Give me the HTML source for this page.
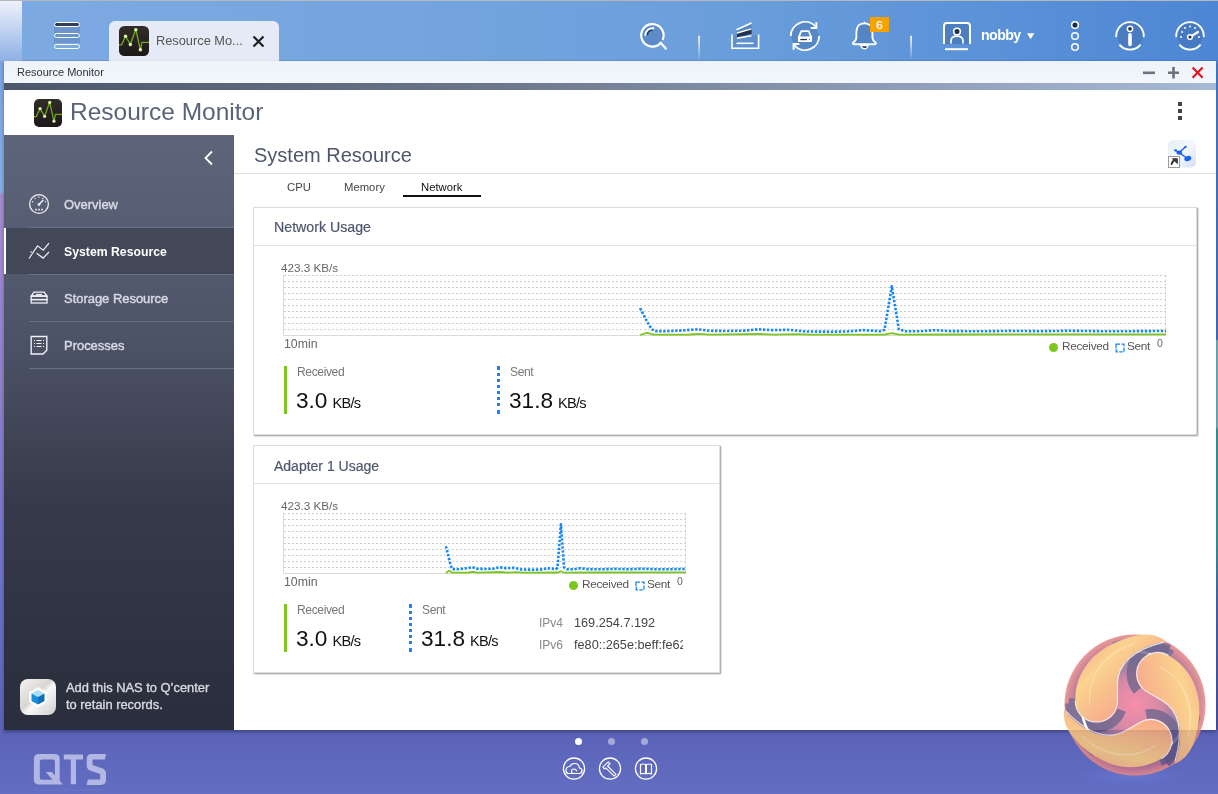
<!DOCTYPE html>
<html><head><meta charset="utf-8">
<style>
*{margin:0;padding:0;box-sizing:border-box}
html,body{width:1218px;height:794px;overflow:hidden}
body{position:relative;font-family:"Liberation Sans",sans-serif;background:#5c64b9}
.a{position:absolute}
.t{position:absolute;white-space:nowrap;line-height:1;will-change:transform}
#desk{left:0;top:0;width:1218px;height:794px;background:linear-gradient(180deg,#7fa8e1 0px,#7aa3df 61px,#86aee6 192px,#a58bd2 194px,#8d7fcc 400px,#6a70c8 600px,#5b63b8 735px,#626ec2 794px)}
#topbar{left:0;top:0;width:1218px;height:61px;background:linear-gradient(90deg,#7eaae2 0%,#73a3dd 40%,#6a9edb 60%,#4d86d4 100%)}
#win{left:4px;top:61px;width:1212px;height:669px;background:#fff;box-shadow:0 2px 3px rgba(20,20,60,.4)}
#tbar{left:0;top:0;width:1212px;height:22px;background:linear-gradient(180deg,#eef2f9,#f2f6fd)}
#gbar{left:0;top:22px;width:1212px;height:7px;background:linear-gradient(90deg,#4d566c 0%,#6c7689 40%,#8a9ab4 70%,#a8b9d4 100%)}
#side{left:0;top:74px;width:230px;height:595px;background:linear-gradient(180deg,#5e657a 0%,#4e5468 33%,#363a4a 62%,#2a2d3b 100%)}
.sep{position:absolute;left:25px;width:205px;height:1px;background:#6a7084}
.nav{position:absolute;font-weight:normal;font-size:12.95px;color:#d6d9e4;-webkit-text-stroke:0.45px currentColor}
.card{position:absolute;background:#fff;border:1px solid #dedede;box-shadow:1px 1px 1.5px rgba(0,0,0,.42)}
.ch{position:absolute;left:0;width:100%;height:1px;background:#e2e2e2}
.lbl{color:#666;font-size:11.7px}
.lg{font-size:11.8px;color:#555;letter-spacing:-0.3px}
.tab{font-size:11.3px;color:#444}
</style></head><body>
<div id="desk" class="a"></div>
<div id="topbar" class="a"></div>
<div class="a" style="left:1214px;top:61px;width:4px;height:669px;background:linear-gradient(180deg,#4a80d0 0px,#4a70c4 278px,#7ab2bc 280px,#7ab2bc 366px,#3c9898 369px,#3c9898 480px,#4c68b0 540px,#4a52a8 669px)"></div>
<div class="a" style="left:0;top:0;width:1218px;height:1px;background:#b4b8c0"></div>
<div class="a" style="left:22px;top:60px;width:1196px;height:1px;background:rgba(40,90,170,.18)"></div>
<div class="a" style="left:0;top:1px;width:22px;height:60px;background:linear-gradient(180deg,#eef2fa,#8eb0e4)"></div>

<!-- hamburger -->
<div class="a" style="left:54px;top:27px;width:26px;height:16px;background:rgba(60,90,140,.25)"></div>
<div class="a" style="left:54px;top:22px;width:26px;height:5px;border:1.5px solid #fff;border-radius:3px;background:#2e3d5a"></div>
<div class="a" style="left:54px;top:33px;width:26px;height:5px;border:1.5px solid #fff;border-radius:3px;background:transparent"></div>
<div class="a" style="left:54px;top:44px;width:26px;height:5px;border:1.5px solid #fff;border-radius:3px;background:transparent"></div>

<!-- tab -->
<div class="a" style="left:109px;top:21px;width:170px;height:40px;background:#e4ebf6;border-radius:6px 6px 0 0"></div>

<svg class="a" style="left:119px;top:26px" width="30" height="30" viewBox="0 0 28 28">
 <rect x="0" y="0" width="28" height="28" rx="5" fill="url(#ig)"/>
 <path d="M0 17.6L2.4 17.6L6.1 9.6L10.6 17.3L15.7 3.1L19.95 22.4L21.4 15.3L28 15.3" stroke="#72ac1c" stroke-width="1.2" fill="none" stroke-linejoin="round"/>
 <g fill="#daf2b0"><circle cx="6.1" cy="9.6" r="1.6"/><circle cx="10.6" cy="17.3" r="1.6"/><circle cx="15.7" cy="3.4" r="1.6"/><circle cx="19.95" cy="22.2" r="1.6"/></g>
</svg>
<div class="t" style="left:155.5px;top:34.5px;font-size:12.8px;color:#555">Resource Mo...</div>
<svg class="a" style="left:252px;top:35px" width="13" height="13" viewBox="0 0 13 13"><path d="M1.5 1.5L11.5 11.5M11.5 1.5L1.5 11.5" stroke="#1e1e1e" stroke-width="2.2"/></svg>


<!-- top icons -->
<svg class="a" style="left:620px;top:10px" width="600" height="51" viewBox="620 10 600 51">
 <!-- search -->
 <circle cx="652.4" cy="35.4" r="10.5" fill="rgba(50,90,150,.28)"/>
 <path d="M660.6 43A11.2 11.2 0 1 1 662.6 40" stroke="#fff" stroke-width="2.1" fill="none"/>
 <path d="M660.4 42.6L665.8 48.6" stroke="#fff" stroke-width="2.2" stroke-linecap="round"/>
 <path d="M647.3 35.2A5.2 5.2 0 0 1 652.4 30.2" stroke="#26344f" stroke-width="1.8" fill="none"/>
 <path d="M645.3 35A7.1 7.1 0 0 1 653.4 28.3" stroke="#fff" stroke-width="1.9" fill="none" stroke-linecap="round"/>
 <!-- dividers -->
 <defs><linearGradient id="dv" x1="0" y1="0" x2="0" y2="1"><stop offset="0" stop-color="#fff4dc"/><stop offset="1" stop-color="#fff" stop-opacity="0.05"/></linearGradient></defs>
 <rect x="698.2" y="35.8" width="1.8" height="23.5" fill="url(#dv)"/>
 <rect x="910.2" y="35.8" width="1.8" height="23.5" fill="url(#dv)"/>
 <!-- stack -->
 <path d="M732.8 35.2H757.8V47.4H732.8Z" fill="rgba(50,90,150,.18)"/>
 <path d="M736.5 30L751.5 23.3V37L737 38.5Z" fill="rgba(40,80,140,.3)"/>
 <path d="M732 34.5V48.2H758.6V34.5" stroke="#fff" stroke-width="1.6" fill="none"/>
 <path d="M736.5 43.3H753.5" stroke="#fff" stroke-width="1.6"/>
 <path d="M736.5 29.8L751.5 23" stroke="#fff" stroke-width="1.7"/>
 <path d="M737 32.5L751.5 28.3L751.5 33.8L737 37.2Z" fill="#24324c"/>
 <path d="M737 33L751.5 28.8" stroke="#fff" stroke-width="1.4"/>
 <path d="M737 38.3L751.5 35.8" stroke="#fff" stroke-width="1.6"/>
 <!-- sync -->
 <circle cx="805" cy="36" r="13.5" fill="rgba(50,90,150,.28)"/>
 <path d="M790.8 36A14.2 14.2 0 0 1 815.6 26.6" stroke="#fff" stroke-width="1.9" fill="none"/>
 <path d="M819.2 36A14.2 14.2 0 0 1 794.4 45.4" stroke="#fff" stroke-width="1.9" fill="none"/>
 <path d="M810.6 27.9H816.3V22.3" stroke="#fff" stroke-width="2" fill="none"/>
 <path d="M799.3 44.1H793.6V49.7" stroke="#fff" stroke-width="2" fill="none"/>
 <path d="M801.3 31.2H808.7L811.3 37.3H798.7Z" stroke="#fff" stroke-width="1.8" fill="none" stroke-linejoin="round"/>
 <rect x="798" y="37" width="14" height="5" rx=".8" fill="#fff"/>
 <rect x="800.3" y="38.9" width="6.6" height="1.3" fill="#26344f"/>
 <circle cx="809.5" cy="39.5" r=".7" fill="#5a7ab0"/>
 <!-- bell -->
 <path d="M864.4 23.4C859 23.4 856.4 27.2 856.4 31.8V37C856.4 40 854.8 41.4 853.5 42.3Q852.6 43 853 43.7Q853.4 44.3 854.5 44.3H874.3Q875.4 44.3 875.8 43.7Q876.2 43 875.3 42.3C874 41.4 872.4 40 872.4 37V31.8C872.4 27.2 869.8 23.4 864.4 23.4Z" fill="rgba(50,90,150,.3)" stroke="#fff" stroke-width="1.9" stroke-linejoin="round"/>
 <path d="M862.8 23.6L864.4 21.4L866 23.6Z" fill="#fff"/>
 <path d="M861 45.4A3.4 3.4 0 0 0 867.8 45.4Z" fill="#26344f" stroke="#fff" stroke-width="1.5"/>
 <rect x="870" y="17" width="19" height="15" fill="#f6a300"/>
 <text x="879.6" y="28.8" font-family="Liberation Sans" font-size="11.8" fill="#fff" stroke="#fff" stroke-width=".25" text-anchor="middle">6</text>
 <!-- user -->
 <path d="M944 44V26Q944 23 947 23H967Q970 23 970 26V44" fill="rgba(50,90,150,.35)" stroke="#fff" stroke-width="2"/>
 <rect x="945" y="48.2" width="23" height="2" fill="#fff"/>
 <circle cx="957" cy="31.5" r="3.3" fill="#22304a" stroke="#fff" stroke-width="1.6"/>
 <path d="M951 43.5V41Q951 36.2 957 36.2Q963 36.2 963 41V43.5" stroke="#fff" stroke-width="1.7" fill="none"/>
 <path d="M1027 33.2H1034.3L1030.65 39.2Z" fill="#fff"/>
 <!-- kebab -->
 <circle cx="1075" cy="25" r="3.3" fill="#1e2b44" stroke="#fff" stroke-width="1.5"/>
 <circle cx="1075" cy="36" r="3.3" fill="none" stroke="#fff" stroke-width="1.5"/>
 <circle cx="1075" cy="47" r="3.3" fill="none" stroke="#fff" stroke-width="1.5"/>
 <!-- info -->
 <circle cx="1130" cy="36" r="12.5" fill="rgba(50,90,150,.3)"/>
 <path d="M1116.25 37.1A13.8 13.8 0 1 1 1143.75 37.1" stroke="#fff" stroke-width="1.9" fill="none"/>
 <path d="M1119.40 44.7A13.8 13.8 0 0 0 1140.60 44.7" stroke="#fff" stroke-width="1.9" fill="none"/>
 <circle cx="1130" cy="28.8" r="2.6" fill="#22304a" stroke="#fff" stroke-width="1.5"/>
 <path d="M1130 34.8V44.5" stroke="#fff" stroke-width="3.6" stroke-linecap="round"/>
 <!-- gauge -->
 <circle cx="1190" cy="36" r="12.5" fill="rgba(50,90,150,.3)"/>
 <path d="M1176.25 37.1A13.8 13.8 0 1 1 1203.75 37.1" stroke="#fff" stroke-width="1.9" fill="none"/>
 <path d="M1179.40 44.7A13.8 13.8 0 0 0 1200.60 44.7" stroke="#fff" stroke-width="1.9" fill="none"/>
 <g fill="#fff"><circle cx="1190" cy="26.5" r="1"/><circle cx="1185" cy="28" r="1"/><circle cx="1195" cy="28" r="1"/><circle cx="1182" cy="32" r="1"/><circle cx="1181" cy="37" r="1"/><circle cx="1199" cy="37" r="1"/></g>
 <path d="M1190 37L1198 32" stroke="#fff" stroke-width="2.2" stroke-linecap="round"/>
 <circle cx="1190" cy="37" r="2.3" fill="#22304a" stroke="#fff" stroke-width="1.5"/>
</svg>
<div class="t" style="left:980.8px;top:28px;font-size:14.2px;font-weight:bold;color:#fff;letter-spacing:-0.6px">nobby</div>


<!-- dock -->
<div class="a" style="left:575px;top:738px;width:7px;height:7px;border-radius:50%;background:#fff"></div>
<div class="a" style="left:608px;top:738px;width:7px;height:7px;border-radius:50%;background:rgba(255,255,255,.45)"></div>
<div class="a" style="left:641px;top:738px;width:7px;height:7px;border-radius:50%;background:rgba(255,255,255,.45)"></div>
<svg class="a" style="left:560px;top:754px" width="100" height="30" viewBox="560 754 100 30" fill="none" stroke="#fff" stroke-width="1.3">
 <circle cx="574" cy="768.6" r="10.6"/>
 <path d="M568.5 773.5H579.5Q582 773.5 582 770.8Q582 768.2 579.4 768Q579 763.5 574.5 763.5Q571 763.5 569.8 766.5Q566 766.8 566 770.2Q566 773.5 568.5 773.5Z" stroke-width="1.2"/>
 <path d="M576.5 771.5Q576.5 769 574 769Q571.5 769 571.5 771.2Q571.5 773.5 574 773.5" stroke-width="1.1"/>
 <circle cx="610" cy="768.6" r="10.6"/>
 <path d="M602.8 767.2L608.2 761.8L610 763.6L607.6 766L616 774.4L614.2 776.2L605.8 767.8L604.6 769Z" stroke-width="1.1" stroke-linejoin="round"/>
 <circle cx="646" cy="768.6" r="10.6"/>
 <path d="M640.5 764.5Q643.5 763.5 645.6 764.5V773.8Q643.5 773 640.5 773.8ZM646.4 764.5Q648.5 763.5 651.5 764.5V773.8Q648.5 773 646.4 773.8Z" stroke-width="1.2"/>
</svg>
<!-- QTS logo -->
<svg class="a" style="left:0;top:740px" width="120" height="54" viewBox="0 740 120 54">
 <g fill="#b3b7e3">
  <path fill-rule="evenodd" d="M39 753.9H54.7Q59.7 753.9 59.7 758.9V779.5Q59.7 784.5 54.7 784.5H39Q33.9 784.5 33.9 779.5V758.9Q33.9 753.9 39 753.9ZM41.8 759.4H52.9Q54.9 759.4 54.9 761.4V777.7Q54.9 779.7 52.9 779.7H41.8Q39.8 779.7 39.8 777.7V761.4Q39.8 759.4 41.8 759.4Z"/>
  <path d="M45.7 772H51.8L63 784.4H56.8Z"/>
  <path d="M63.8 754.6H83V759.4H76V784.3H70.8V759.4H63.8Z"/>
  <path d="M92 753.9H106L104.8 759.4H93.5Q92.5 759.4 92.5 760.4V765L102 768.2Q106 769.6 106 773.5V779.5Q106 784.9 101 784.9H86.7L87.8 779.5H99.2Q100.2 779.5 100.2 778.5V774L90.6 770.8Q86.7 769.5 86.7 765.5V759Q86.7 753.9 92 753.9Z"/>
 </g>
 <rect x="35" y="789.5" width="70" height="1" fill="rgba(180,184,228,.12)"/>
</svg>

<!-- window -->
<div id="win" class="a">
  <div id="tbar" class="a"></div>
  <div class="t" style="left:12.5px;top:6px;font-size:11px;color:#333">Resource Monitor</div>
  <div id="gbar" class="a"></div>

  <!-- window controls -->
  <svg class="a" style="left:1136px;top:4px" width="70" height="16" viewBox="1140 65 70 16">
   <path d="M1143 72.8H1155" stroke="#6c7280" stroke-width="2.6"/>
   <path d="M1168 72.8H1179M1173.5 67V78.5" stroke="#6c7280" stroke-width="2.6"/>
   <path d="M1192.6 67.6L1202.6 77.8M1202.6 67.6L1192.6 77.8" stroke="#e8141c" stroke-width="2.2"/>
  </svg>
  <div class="t" style="left:65.5px;top:39px;font-size:24.5px;color:#5b6379">Resource Monitor</div>
  <div id="side" class="a"></div>
<!--CONTENT-->
<div class="t" style="left:249.5px;top:84.0px;font-size:20px;color:#4e566e">System Resource</div>
<div class="a" style="left:230px;top:112px;width:982px;height:1px;background:#e0e0e0"></div>
<div class="t tab" style="left:282.6px;top:120.7px">CPU</div>
<div class="t tab" style="left:339.8px;top:120.7px">Memory</div>
<div class="t tab" style="left:416.6px;top:120.7px;color:#111">Network</div>
<div class="a" style="left:399px;top:134px;width:78px;height:2px;background:#111"></div>
<div class="card" style="left:249px;top:146px;width:944px;height:228px"><div class="ch" style="top:37px"></div></div>
<div class="t" style="left:269.5px;top:159.3px;font-size:14.2px;color:#4e566e;-webkit-text-stroke:0.2px #4e566e">Network Usage</div>
<div class="t lbl" style="left:277.4px;top:201.4px">423.3 KB/s</div>
<svg class="a" style="left:278px;top:213px" width="886" height="64" viewBox="278 213.0 886 64">
<path d="M280.0 214.5H1162.0" stroke="#cfcfcf" stroke-width="1" stroke-dasharray="2 2"/>
<path d="M280.0 220.5H1162.0" stroke="#cfcfcf" stroke-width="1" stroke-dasharray="2 2"/>
<path d="M280.0 226.5H1162.0" stroke="#cfcfcf" stroke-width="1" stroke-dasharray="2 2"/>
<path d="M280.0 232.5H1162.0" stroke="#cfcfcf" stroke-width="1" stroke-dasharray="2 2"/>
<path d="M280.0 238.5H1162.0" stroke="#cfcfcf" stroke-width="1" stroke-dasharray="2 2"/>
<path d="M280.0 244.5H1162.0" stroke="#cfcfcf" stroke-width="1" stroke-dasharray="2 2"/>
<path d="M280.0 250.5H1162.0" stroke="#cfcfcf" stroke-width="1" stroke-dasharray="2 2"/>
<path d="M280.0 256.5H1162.0" stroke="#cfcfcf" stroke-width="1" stroke-dasharray="2 2"/>
<path d="M280.0 262.5H1162.0" stroke="#cfcfcf" stroke-width="1" stroke-dasharray="2 2"/>
<path d="M280.0 268.5H1162.0" stroke="#cfcfcf" stroke-width="1" stroke-dasharray="2 2"/>
<path d="M1161.5 214.5V274.5" stroke="#cfcfcf" stroke-width="1" stroke-dasharray="2 2"/>
<path d="M279.5 214.0V274.5H1162.0" stroke="#d9d9d9" stroke-width="1" fill="none"/>
<polyline points="636.0,274.0 643.0,271.8 650.0,273.6 686.0,273.5 695.0,272.8 706.0,273.6 756.0,273.0 771.0,273.6 792.0,273.1 806.0,273.6 881.0,273.5 888.0,272.2 895.0,273.6 946.0,273.5 1162.0,273.4" fill="none" stroke="#7dc61e" stroke-width="1.8" stroke-linejoin="round"/>
<polyline points="636.0,247.2 638.0,250.8 640.0,254.6 642.0,258.5 644.0,262.2 646.0,265.5 648.0,268.2 650.5,270.1 661.0,270.2 676.0,269.6 694.0,268.3 705.0,269.8 726.0,270.0 741.0,269.6 754.0,268.3 768.0,269.1 784.0,268.8 801.7,270.5 827.0,270.7 846.0,270.4 858.8,269.1 876.5,270.2 880.5,268.8 887.8,225.3 894.9,268.3 901.0,270.2 916.0,270.3 931.0,269.2 946.0,270.1 976.0,270.3 1006.0,269.9 1036.0,270.2 1066.0,269.8 1096.0,270.2 1126.0,270.2 1162.0,270.0" fill="none" stroke="#1787f5" stroke-width="2.6" stroke-dasharray="2.4 1.6" stroke-linejoin="round"/>
</svg>
<div class="t lbl" style="left:279.8px;top:276.6px;font-size:12.3px">10min</div>
<div class="a" style="left:1045.0px;top:282.0px;width:9px;height:9px;border-radius:50%;background:#7dc61e"></div>
<div class="t lg" style="left:1057.6px;top:279.5px">Received</div>
<svg class="a" style="left:1110.5px;top:281.5px" width="10" height="10"><path d="M1 5V1.2H5M6.5 1.2H9V3.2M9 4.5V8.8M7.8 8.8H4.2M3 8.8H1.2V5.8" stroke="#1787f5" stroke-width="1.3" fill="none"/></svg>
<div class="t lg" style="left:1123.3px;top:279.5px">Sent</div>
<div class="t" style="left:1152.5px;top:277.2px;font-size:10.5px;color:#666">0</div>
<div class="a" style="left:280px;top:305px;width:3px;height:48px;background:#7dc61e"></div>
<svg class="a" style="left:493px;top:305px" width="3" height="48"><path d="M1.5 0V48" stroke="#1787f5" stroke-width="3" stroke-dasharray="4 3 3 3 3 3 3 3 3 3 3 3 3 4 4"/></svg>
<div class="t" style="left:292.7px;top:305.4px;font-size:12.1px;letter-spacing:-0.4px;color:#777">Received</div>
<div class="t" style="left:292.4px;top:328.9px;font-size:22.6px;color:#111">3.0<span style="font-size:14.6px;letter-spacing:-0.75px;margin-left:5px">KB/s</span></div>
<div class="t" style="left:505.7px;top:305.4px;font-size:12.1px;letter-spacing:-0.4px;color:#777">Sent</div>
<div class="t" style="left:505.4px;top:328.9px;font-size:22.6px;color:#111">31.8<span style="font-size:14.6px;letter-spacing:-0.75px;margin-left:5px">KB/s</span></div>
<div class="card" style="left:249px;top:384px;width:467px;height:228px"><div class="ch" style="top:37px"></div></div>
<div class="t" style="left:270px;top:397.6px;font-size:14px;color:#4e566e;-webkit-text-stroke:0.2px #4e566e">Adapter 1 Usage</div>
<div class="t lbl" style="left:277.4px;top:439.4px">423.3 KB/s</div>
<svg class="a" style="left:278px;top:451px" width="406" height="64" viewBox="278 451.0 406 64">
<path d="M280.0 452.5H682.0" stroke="#cfcfcf" stroke-width="1" stroke-dasharray="2 2"/>
<path d="M280.0 458.5H682.0" stroke="#cfcfcf" stroke-width="1" stroke-dasharray="2 2"/>
<path d="M280.0 464.5H682.0" stroke="#cfcfcf" stroke-width="1" stroke-dasharray="2 2"/>
<path d="M280.0 470.5H682.0" stroke="#cfcfcf" stroke-width="1" stroke-dasharray="2 2"/>
<path d="M280.0 476.5H682.0" stroke="#cfcfcf" stroke-width="1" stroke-dasharray="2 2"/>
<path d="M280.0 482.5H682.0" stroke="#cfcfcf" stroke-width="1" stroke-dasharray="2 2"/>
<path d="M280.0 488.5H682.0" stroke="#cfcfcf" stroke-width="1" stroke-dasharray="2 2"/>
<path d="M280.0 494.5H682.0" stroke="#cfcfcf" stroke-width="1" stroke-dasharray="2 2"/>
<path d="M280.0 500.5H682.0" stroke="#cfcfcf" stroke-width="1" stroke-dasharray="2 2"/>
<path d="M280.0 506.5H682.0" stroke="#cfcfcf" stroke-width="1" stroke-dasharray="2 2"/>
<path d="M681.5 452.5V512.5" stroke="#cfcfcf" stroke-width="1" stroke-dasharray="2 2"/>
<path d="M279.5 452.0V512.5H682.0" stroke="#d9d9d9" stroke-width="1" fill="none"/>
<polyline points="441.9,512.0 445.1,509.8 448.3,511.6 464.8,511.5 468.9,510.8 473.9,511.6 496.7,511.0 503.5,511.6 513.1,511.1 519.5,511.6 553.8,511.5 556.9,510.2 560.1,511.6 583.4,511.5 682.0,511.4" fill="none" stroke="#7dc61e" stroke-width="1.8" stroke-linejoin="round"/>
<polyline points="441.9,485.2 442.8,488.8 443.8,492.6 444.7,496.5 445.6,500.2 446.5,503.5 447.4,506.2 448.6,508.1 453.3,508.2 460.2,507.6 468.4,506.3 473.4,507.8 483.0,508.0 489.9,507.6 495.8,506.3 502.2,507.1 509.5,506.8 517.6,508.5 529.1,508.7 537.8,508.4 543.6,507.1 551.7,508.2 553.5,506.8 556.9,463.3 560.1,506.3 562.9,508.2 569.7,508.3 576.6,507.2 583.4,508.1 597.1,508.3 610.8,507.9 624.5,508.2 638.2,507.8 651.9,508.2 665.6,508.2 682.0,508.0" fill="none" stroke="#1787f5" stroke-width="2.6" stroke-dasharray="2.4 1.6" stroke-linejoin="round"/>
</svg>
<div class="t lbl" style="left:279.8px;top:514.6px;font-size:12.3px">10min</div>
<div class="a" style="left:565.0px;top:520.0px;width:9px;height:9px;border-radius:50%;background:#7dc61e"></div>
<div class="t lg" style="left:577.6px;top:517.5px">Received</div>
<svg class="a" style="left:630.5px;top:519.5px" width="10" height="10"><path d="M1 5V1.2H5M6.5 1.2H9V3.2M9 4.5V8.8M7.8 8.8H4.2M3 8.8H1.2V5.8" stroke="#1787f5" stroke-width="1.3" fill="none"/></svg>
<div class="t lg" style="left:643.3px;top:517.5px">Sent</div>
<div class="t" style="left:672.5px;top:515.2px;font-size:10.5px;color:#666">0</div>
<div class="a" style="left:280px;top:543px;width:3px;height:48px;background:#7dc61e"></div>
<svg class="a" style="left:405px;top:543px" width="3" height="48"><path d="M1.5 0V48" stroke="#1787f5" stroke-width="3" stroke-dasharray="4 3 3 3 3 3 3 3 3 3 3 3 3 4 4"/></svg>
<div class="t" style="left:292.7px;top:543.4px;font-size:12.1px;letter-spacing:-0.4px;color:#777">Received</div>
<div class="t" style="left:292.4px;top:566.9px;font-size:22.6px;color:#111">3.0<span style="font-size:14.6px;letter-spacing:-0.75px;margin-left:5px">KB/s</span></div>
<div class="t" style="left:417.7px;top:543.4px;font-size:12.1px;letter-spacing:-0.4px;color:#777">Sent</div>
<div class="t" style="left:417.4px;top:566.9px;font-size:22.6px;color:#111">31.8<span style="font-size:14.6px;letter-spacing:-0.75px;margin-left:5px">KB/s</span></div>
<div class="t" style="left:534.8px;top:556.2px;font-size:12px;color:#888">IPv4</div>
<div class="t" style="left:534.8px;top:578.2px;font-size:12px;color:#888">IPv6</div>
<div class="t" style="left:569.8px;top:556.1px;font-size:12.7px;color:#444">169.254.7.192</div>
<div class="t" style="left:569.8px;top:578.0px;font-size:12.7px;color:#444;width:108.7px;overflow:hidden">fe80::265e:beff:fe62:1a2b</div>
<!--/CONTENT-->

  <!-- app icon header -->
  <svg class="a" style="left:30px;top:38px" width="28" height="28" viewBox="0 0 28 28">
   <defs><linearGradient id="ig" x1="0" y1="0" x2="0" y2="1"><stop offset="0" stop-color="#322c2a"/><stop offset="1" stop-color="#1c1817"/></linearGradient></defs>
   <rect x="0" y="0" width="28" height="28" rx="5" fill="url(#ig)"/>
   <path d="M0 17.6L2.4 17.6L6.1 9.6L10.6 17.3L15.7 3.1L19.95 22.4L21.4 15.3L28 15.3" stroke="#72ac1c" stroke-width="1.2" fill="none" stroke-linejoin="round"/>
   <g fill="#daf2b0"><circle cx="6.1" cy="9.6" r="1.6"/><circle cx="10.6" cy="17.3" r="1.6"/><circle cx="15.7" cy="3.4" r="1.6"/><circle cx="19.95" cy="22.2" r="1.6"/></g>
  </svg>

  <!-- network diagram icon -->
  <svg class="a" style="left:1164px;top:79px" width="28" height="28" viewBox="1168 140 28 28">
   <defs><linearGradient id="ng" x1="0" y1="0" x2="1" y2="1"><stop offset="0" stop-color="#e4f0f8"/><stop offset=".5" stop-color="#f4f8fc"/><stop offset="1" stop-color="#d4def0"/></linearGradient></defs>
   <rect x="1168" y="140" width="28" height="27.5" rx="5" fill="url(#ng)"/>
   <path d="M1175.5 150.5L1179.2 152.6L1185.5 146.8M1179.2 152.6L1187.5 158.5" stroke="#1a62f0" stroke-width="1.3" fill="none"/>
   <ellipse cx="1179.3" cy="152.6" rx="2.8" ry="2.2" fill="#1a62f0"/>
   <ellipse cx="1175.5" cy="150.3" rx="1.6" ry="1.1" fill="#1a62f0"/>
   <ellipse cx="1185.5" cy="147" rx="1.4" ry="1" transform="rotate(-40 1185.5 147)" fill="#1a62f0"/>
   <ellipse cx="1187.8" cy="158.6" rx="3.6" ry="2.5" transform="rotate(-20 1187.8 158.6)" fill="#1a62f0"/>
   <rect x="1168.5" y="156.5" width="11" height="11" fill="#fff" stroke="#9a9a9a" stroke-width="1"/>
   <path d="M1171.5 165Q1171.5 160.5 1175.5 160M1173.5 159H1177V162.5Z" stroke="#333" stroke-width="1.6" fill="#333"/>
  </svg>
  <!-- kebab header -->
  <div class="a" style="left:1174px;top:41px;width:4px;height:4px;background:#444"></div>
  <div class="a" style="left:1174px;top:48px;width:4px;height:4px;background:#444"></div>
  <div class="a" style="left:1174px;top:55px;width:4px;height:4px;background:#444"></div>

  <!-- sidebar items -->
  <svg class="a" style="left:197px;top:89px" width="14" height="16" viewBox="0 0 14 16"><path d="M11 1.5L4.5 8L11 14.5" stroke="#fff" stroke-width="1.8" fill="none"/></svg>
  <div class="a" style="left:0;top:167px;width:230px;height:46px;background:#434859"></div>
  <div class="a" style="left:0;top:167px;width:2px;height:46px;background:#fff"></div>
  <div class="sep" style="top:166px"></div>
  <div class="sep" style="top:213px"></div>
  <div class="sep" style="top:260px"></div>
  <div class="sep" style="top:307px"></div>
  <div class="nav t" style="left:60px;top:138.3px">Overview</div>
  <div class="nav t" style="left:60px;top:184.7px;color:#fff;font-weight:bold;font-size:12.25px;-webkit-text-stroke:0">System Resource</div>
  <div class="nav t" style="left:60px;top:232.3px">Storage Resource</div>
  <div class="nav t" style="left:60px;top:279.3px">Processes</div>
  <svg class="a" style="left:20px;top:130px" width="40" height="240" viewBox="24 191 40 240" fill="none" stroke="#eef0f4">
   <circle cx="39" cy="204" r="9.4" stroke-width="1.3"/>
   <path d="M33.17 201.88L31.86 201.40M35.44 198.92L34.64 197.77M39.00 197.80L39.00 196.40M42.56 198.92L43.36 197.77M44.83 201.88L46.14 201.40" stroke-width="1.1"/>
   <path d="M39 204.5L43.3 200" stroke-width="1.5"/>
   <circle cx="39" cy="204.5" r="1.4" fill="#eef0f4" stroke="none"/>
   <path d="M35.2 209.6H36.8M38.2 209.6H39.8M41.2 209.6H42.8" stroke-width="1.6"/>
   <path d="M29 258.5L37.5 245.8L43.2 250.2L49 243.2M36.6 253.3L43.1 258.1L49 252" stroke-width="1.2"/>
   <circle cx="31" cy="252" r=".8" fill="#eef0f4" stroke="none"/>
   <path d="M34 292.2H44.2L47 296H31.2Z" stroke-width="1.3"/>
   <path d="M36 294.6H42" stroke-width="1.4"/>
   <rect x="31.2" y="296.2" width="15.8" height="3.4" stroke-width="1.3"/>
   <rect x="31.2" y="299.6" width="15.8" height="3.4" stroke-width="1.3"/>
   <path d="M31.2 336.5H46.8V350.3L43 354H31.2Z" stroke-width="1.4"/>
   <path d="M34 340.5H35M34 343.5H35M34 346.5H35M43 340.5H44M43 343.5H44M43 346.5H44M36.5 340.5H41.5M36.5 343.5H41.5M36.5 346.5H41.5" stroke-width="1.1"/>
  </svg>
  <!-- qcenter -->
  <svg class="a" style="left:16px;top:618px" width="36" height="36" viewBox="0 0 36 36">
   <defs><linearGradient id="qg" x1="0" y1="0" x2="1" y2="1"><stop offset="0" stop-color="#f4f4f4"/><stop offset=".45" stop-color="#d8d6d2"/><stop offset=".55" stop-color="#f8f8f8"/><stop offset="1" stop-color="#cfcdc9"/></linearGradient></defs>
   <rect width="36" height="36" rx="8" fill="url(#qg)"/>
   <path d="M18 8L27 13V23L18 28L9 23V13Z" fill="#fff" opacity=".85"/>
   <path d="M18 11L24.5 14.5L18 18L11.5 14.5Z" fill="#a9e0f5"/>
   <path d="M11.5 14.5L18 18V25.5L11.5 22Z" fill="#1a8fd8"/>
   <path d="M24.5 14.5L18 18V25.5L24.5 22Z" fill="#0f6fb8"/>
  </svg>
  <div class="t" style="left:62px;top:619.2px;font-size:12.9px;font-weight:normal;-webkit-text-stroke:0.35px #d9dbe2;color:#d9dbe2;line-height:16.6px">Add this NAS to Q’center<br>to retain records.</div>
</div>


<!-- watermark logo -->
<svg class="a" style="left:1040px;top:620px;z-index:5" width="178" height="174" viewBox="1040 620 178 174">
 <defs>
  <radialGradient id="lc" cx="0.5" cy="0.5" r="0.5"><stop offset="0" stop-color="#f67c9c"/><stop offset=".35" stop-color="#d27898"/><stop offset=".62" stop-color="#866c92"/><stop offset=".78" stop-color="#7a6690"/><stop offset=".9" stop-color="#c2708c"/><stop offset="1" stop-color="#e88a84"/></radialGradient>
  <linearGradient id="lb" x1="0" y1="0" x2="1" y2="1"><stop offset="0" stop-color="#f08a82"/><stop offset=".32" stop-color="#fbcc7c"/><stop offset=".62" stop-color="#f6a67a"/><stop offset="1" stop-color="#de6a8a"/></linearGradient>
  <radialGradient id="ls" cx="0.5" cy="0.5" r="0.5"><stop offset="0" stop-color="#7080d8" stop-opacity=".6"/><stop offset="1" stop-color="#6070d0" stop-opacity="0"/></radialGradient>
 </defs>
 <ellipse cx="1132" cy="776" rx="60" ry="10" fill="url(#ls)"/>
 <g transform="translate(1135 705) scale(1.03)" opacity=".86">
  <circle r="68.5" fill="url(#lc)"/>
  <g id="rb">
   <path d="M-19.8 -54.5A58.0 58.0 0 0 1 34.1 -46.9" stroke="#6e5c88" stroke-width="13" fill="none"/>
   <path d="M-13.1 4.9A26.0 26.0 0 0 1 -63.4 -1.7" stroke="#5a4e7c" stroke-width="9" fill="none" opacity=".8"/>
   <path d="M-1.8 -52.0A52.0 52.0 0 0 1 26.0 -45.0" stroke="#fff" stroke-width="2.4" fill="none" stroke-linecap="round"/>
  </g>
  <use href="#rb" transform="rotate(120)"/>
  <use href="#rb" transform="rotate(240)"/>
  <g id="bl">
   <path d="M-58 -4C-58 -40 -30 -62 5 -68Q20 -70 30 -62C5 -57 -17 -45 -17 -20L-17 -4A20.5 20.5 0 0 1 -58 -4Z" fill="url(#lb)"/>
   <path d="M28 -61C4 -55 -17 -44 -17 -20L-17 -4A20.5 20.5 0 0 1 -58 -4" stroke="#fff" stroke-width="1.1" fill="none" opacity=".8"/>
   <path d="M-44 -2C-46 -28 -30 -50 0 -60" stroke="#fff" stroke-width=".8" fill="none" opacity=".45"/>
  </g>
  <use href="#bl" transform="rotate(120)"/>
  <use href="#bl" transform="rotate(240)"/>
 </g>
</svg>

</body></html>
